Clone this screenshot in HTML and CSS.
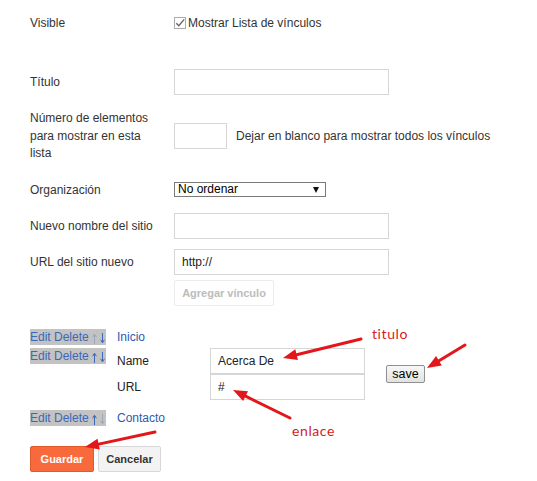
FILE: index.html
```html
<!DOCTYPE html>
<html lang="es">
<head>
<meta charset="utf-8">
<title>Lista de vínculos</title>
<link rel="stylesheet" href="styles.css">
</head>
<body>
<div class="page">
  <div class="row row-visible">
    <div class="label">Visible</div>
    <label class="check">
      <svg class="box" width="12" height="12" viewBox="0 0 12 12"><rect x="0.5" y="0.5" width="11" height="11" fill="#fff" stroke="#ababab"/><polyline points="2.3,6.2 4.8,8.8 10.2,2.4" fill="none" stroke="#666" stroke-width="1.4"/></svg>
      <span>Mostrar Lista de vínculos</span>
    </label>
  </div>

  <div class="row row-titulo">
    <div class="label">Título</div>
    <input class="text wide" type="text" value="">
  </div>

  <div class="row row-num">
    <div class="label tall">Número de elementos para mostrar en esta lista</div>
    <input class="text small" type="text" value="">
    <span class="hint">Dejar en blanco para mostrar todos los vínculos</span>
  </div>

  <div class="row row-org">
    <div class="label">Organización</div>
    <div class="select"><span>No ordenar</span><span class="caret"></span></div>
  </div>

  <div class="row row-name">
    <div class="label">Nuevo nombre del sitio</div>
    <input class="text wide" type="text" value="">
  </div>

  <div class="row row-url">
    <div class="label">URL del sitio nuevo</div>
    <input class="text wide" type="text" value="http://">
  </div>

  <div class="row row-add">
    <button class="btn-disabled" type="button">Agregar vínculo</button>
  </div>

  <div class="links">
    <div class="link-row row-a">
      <div class="edit"><span class="ops"><a>Edit</a> <a>Delete</a> <a class="off"><svg class="arr" width="5" height="11" viewBox="0 0 5 11"><path d="M2.5 1.5V11M0.6 4.2L2.5 1.2L4.4 4.2" fill="none" stroke="currentColor" stroke-width="1"/></svg></a> <a><svg class="arr" width="5" height="11" viewBox="0 0 5 11"><path d="M2.5 0V9.5M0.6 6.8L2.5 9.8L4.4 6.8" fill="none" stroke="currentColor" stroke-width="1"/></svg></a></span></div>
      <a class="link">Inicio</a>
    </div>
    <div class="link-row row-b">
      <div class="edit"><span class="ops"><a>Edit</a> <a>Delete</a> <a><svg class="arr" width="5" height="11" viewBox="0 0 5 11"><path d="M2.5 1.5V11M0.6 4.2L2.5 1.2L4.4 4.2" fill="none" stroke="currentColor" stroke-width="1"/></svg></a> <a><svg class="arr" width="5" height="11" viewBox="0 0 5 11"><path d="M2.5 0V9.5M0.6 6.8L2.5 9.8L4.4 6.8" fill="none" stroke="currentColor" stroke-width="1"/></svg></a></span></div>
      <div class="edit-form">
        <span class="elabel l1">Name</span>
        <input class="text mid i1" type="text" value="Acerca De">
        <button class="save" type="button">save</button>
        <span class="elabel l2">URL</span>
        <input class="text mid i2" type="text" value="#">
      </div>
    </div>
    <div class="link-row row-c">
      <div class="edit"><span class="ops"><a>Edit</a> <a>Delete</a> <a><svg class="arr" width="5" height="11" viewBox="0 0 5 11"><path d="M2.5 1.5V11M0.6 4.2L2.5 1.2L4.4 4.2" fill="none" stroke="currentColor" stroke-width="1"/></svg></a> <a class="off"><svg class="arr" width="5" height="11" viewBox="0 0 5 11"><path d="M2.5 0V9.5M0.6 6.8L2.5 9.8L4.4 6.8" fill="none" stroke="currentColor" stroke-width="1"/></svg></a></span></div>
      <a class="link">Contacto</a>
    </div>
  </div>

  <div class="actions">
    <button class="primary" type="button">Guardar</button>
    <button class="secondary" type="button">Cancelar</button>
  </div>

  <svg class="annot" width="537" height="481" viewBox="0 0 537 481">
    <g stroke="#e3171b" stroke-width="3" stroke-linecap="round" fill="none">
      <line x1="361" y1="339" x2="296.6" y2="354.7"/>
      <line x1="465" y1="345" x2="439" y2="360.7"/>
      <line x1="290" y1="418" x2="245.6" y2="396.2"/>
      <line x1="155" y1="432" x2="98.7" y2="444.1"/>
    </g>
    <g fill="#e3171b">
      <polygon points="283,358 295.3,349.3 297.9,360"/>
      <polygon points="427,368 436.1,356 441.8,365.5"/>
      <polygon points="233,390 248,391.2 243.1,401.1"/>
      <polygon points="85,447 97.5,438.7 99.8,449.5"/>
    </g>
  </svg>
  <span class="note note-titulo">titulo</span>
  <span class="note note-enlace">enlace</span>
</div>
</body>
</html>
```
FILE: styles.css
```css
body {
  margin: 0;
  background: #fff;
  font-family: "Liberation Sans", Arial, sans-serif;
  font-size: 12px;
  color: #333;
}

.page {
  position: relative;
  width: 537px;
  height: 481px;
  box-sizing: border-box;
  padding: 13px 0 0 30px;
}

.row {
  display: flex;
  align-items: center;
}

.label {
  flex: none;
  width: 132px;
  padding-right: 12px;
}

.label.tall {
  line-height: 17.5px;
}

.row-visible { height: 20px; }
.row-titulo { margin-top: 36px; height: 26px; }
.row-num { margin-top: 15px; }
.row-org { margin-top: 14px; height: 26px; }
.row-name { margin-top: 10px; height: 26px; }
.row-url { margin-top: 10px; height: 26px; }
.row-add { margin-top: 5px; padding-left: 144px; }

.check {
  display: flex;
  align-items: center;
  gap: 2px;
}

.box {
  display: block;
  flex: none;
}

.text {
  box-sizing: border-box;
  height: 26px;
  margin: 0;
  padding: 0 7px;
  border: 1px solid #d6d6d6;
  border-radius: 0;
  background: #fff;
  font: 12px "Liberation Sans", Arial, sans-serif;
  color: #222;
  outline: none;
}

.wide { width: 215px; }
.small { width: 53px; }
.mid { width: 155px; }

.hint {
  margin-left: 9px;
}

.select {
  box-sizing: border-box;
  width: 152px;
  height: 15px;
  border: 1px solid #7a7a7a;
  padding: 0 6px 0 3px;
  display: flex;
  align-items: center;
  justify-content: space-between;
  color: #000;
  line-height: 13px;
}

.caret {
  width: 0;
  height: 0;
  border-left: 3.5px solid transparent;
  border-right: 3.5px solid transparent;
  border-top: 6px solid #111;
}

.btn-disabled {
  box-sizing: border-box;
  width: 100px;
  height: 26px;
  padding: 0;
  border: 1px solid #ececec;
  border-radius: 2px;
  background: #fff;
  color: #bcbcbc;
  font: bold 11px "Liberation Sans", Arial, sans-serif;
}

.links {
  margin-top: 23px;
}

.link-row {
  display: flex;
  align-items: flex-start;
}

.row-a { margin-bottom: 3px; }
.row-c { margin-top: 10px; }

.edit {
  flex: none;
  width: 87px;
}

.ops {
  display: inline-block;
  height: 16px;
  line-height: 16px;
  background: #c3c3c3;
  padding-right: 1px;
}

.ops a {
  color: #3b68b8;
  text-decoration: none;
}

.ops a.off {
  color: #9ea7b7;
}

.arr {
  vertical-align: -3px;
}

.link {
  color: #2a5cb0;
  line-height: 16px;
  text-decoration: none;
}

.edit-form {
  display: grid;
  grid-template-columns: 93px 155px auto;
  grid-template-rows: 26px 26px;
  align-items: center;
}

.elabel { color: #222; }
.l1 { grid-column: 1; grid-row: 1; }
.i1 { grid-column: 2; grid-row: 1; }
.l2 { grid-column: 1; grid-row: 2; }
.i2 { grid-column: 2; grid-row: 2; }

.save {
  grid-column: 3;
  grid-row: 1 / 3;
  align-self: center;
  margin-left: 21px;
  box-sizing: border-box;
  width: 39px;
  height: 18px;
  padding: 0;
  border: 1px solid #8f8f8f;
  border-radius: 2px;
  background: linear-gradient(#f7f7f7, #e2e2e2);
  color: #000;
  font: 12.5px "Liberation Sans", Arial, sans-serif;
}

.actions {
  margin-top: 20px;
  display: flex;
  gap: 4px;
}

.primary,
.secondary {
  box-sizing: border-box;
  height: 26px;
  padding: 0;
  border-radius: 2px;
  font: bold 11px "Liberation Sans", Arial, sans-serif;
}

.primary {
  width: 64px;
  background: #f8693c;
  border: 1px solid #dd5a2c;
  color: #fff;
}

.secondary {
  width: 63px;
  background: #f3f3f3;
  border: 1px solid #d8d8d8;
  color: #333;
}

.annot {
  position: absolute;
  left: 0;
  top: 0;
  pointer-events: none;
}

.note {
  position: absolute;
  font-family: Lato, "Open Sans", sans-serif;
  font-size: 14px;
  line-height: 16px;
  letter-spacing: 0.6px;
  color: #d8181c;
}

.note-titulo { left: 372px; top: 326px; }
.note-enlace { left: 292px; top: 423px; }
```
